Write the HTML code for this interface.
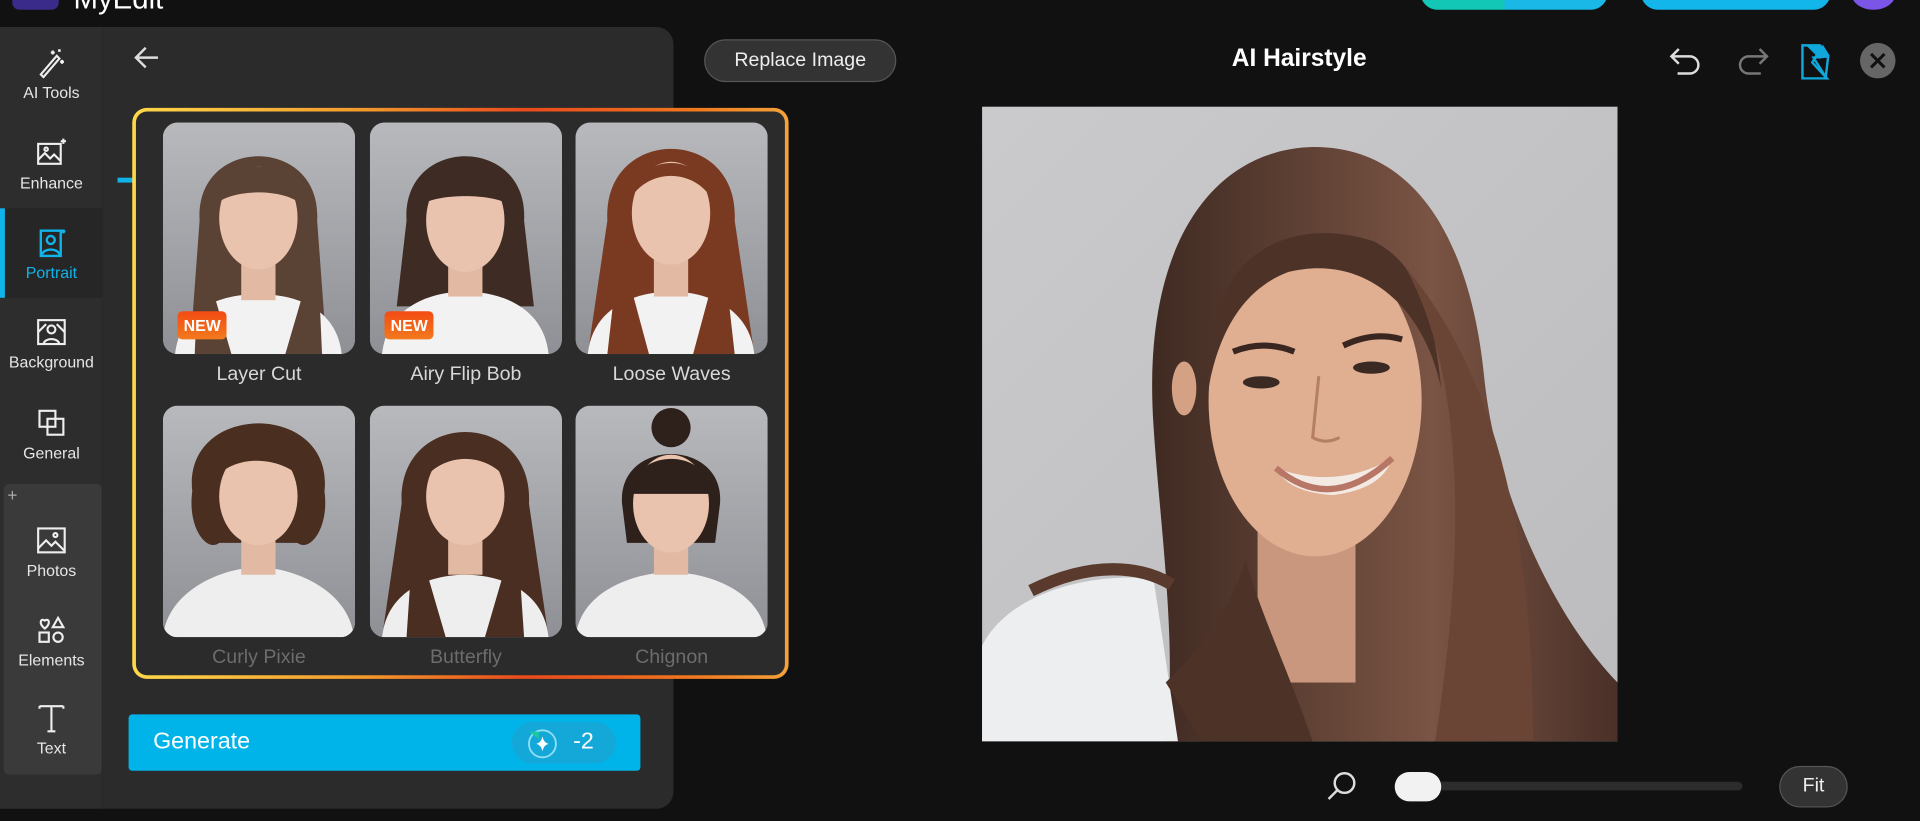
<!DOCTYPE html>
<html><head><meta charset="utf-8"><style>
*{margin:0;padding:0;box-sizing:border-box}
html,body{width:1920px;height:821px;overflow:hidden;background:#111;font-family:"Liberation Sans",sans-serif}
#st{position:absolute;left:0;top:0;width:1568px;height:670px;transform:scale(1.2245,1.2254);transform-origin:0 0;background:#111}
.abs{position:absolute}
.side{left:0;top:22px;width:84px;height:638px;background:#2d2d2d}
.it{position:absolute;left:0;width:84px;text-align:center;color:#e6e6e6;font-size:13px}
.it svg{display:block;margin:0 auto 4px}
.panel{left:84px;top:22px;width:466px;height:638px;background:#2b2b2b;border-radius:0 14px 14px 0}
.pop{left:108px;top:88px;width:536px;height:466px;border-radius:12px;padding:3px;background:linear-gradient(90deg,#ffd84a,#f39a2c 35%,#ea4a1c 60%,#f0771e 85%,#f5a23a)}
.pop>div{width:100%;height:100%;border-radius:9px;background:#2b2b2b;position:relative}
.card{position:absolute;width:157px;height:189px;border-radius:12px;overflow:hidden}
.lbl{position:absolute;width:157px;text-align:center;font-size:16px;color:#d8d8d8}
.new{position:absolute;left:12px;bottom:12px;background:linear-gradient(#f34b14,#f27a1e);color:#fff;font-weight:bold;font-size:13px;padding:4px 5px;border-radius:4px}
</style></head><body><div id="st">
<div class="abs" style="left:10px;top:-12px;width:38px;height:20px;border-radius:6px;background:#3a2a8a"></div>
<div class="abs" style="left:60px;top:-14px;color:#fff;font-size:24px">MyEdit</div>
<div class="abs" style="left:1160px;top:-20px;width:153px;height:28px;border-radius:14px;background:linear-gradient(90deg,#12c7b5 45%,#1ab8e6 45%)"></div>
<div class="abs" style="left:1340px;top:-20px;width:155px;height:28px;border-radius:14px;background:#12b6ea;color:#fff;font-size:12px;text-align:center;line-height:32px">No Watermark</div>
<div class="abs" style="left:1512px;top:-18px;width:36px;height:26px;border-radius:50%;background:#7a55e8"></div>
<div class="abs side"></div>
<div class="abs" style="left:0;top:170px;width:84px;height:73px;background:#262626"></div>
<div class="abs" style="left:0;top:170px;width:4px;height:73px;background:#10b4ea"></div>
<div class="it" style="top:38px"><svg width="26" height="26" viewBox="0 0 24 24" fill="none" stroke="#eee" stroke-width="1.6"><path d="M4 21L16 7l2 2L6 23z"/><path d="M13 3v3M11.5 4.5h3M20 10v3M18.5 11.5h3M18 2v2M17 3h2"/></svg>AI Tools</div>
<div class="it" style="top:112px"><svg width="26" height="26" viewBox="0 0 24 24" fill="none" stroke="#eee" stroke-width="1.6"><rect x="2" y="5" width="17" height="15"/><path d="M2 17l5-5 4 4 3-3 5 5"/><circle cx="8" cy="9" r="1.3"/><path d="M21 1v4M19 3h4"/></svg>Enhance</div>
<div class="it" style="top:185px;color:#10b4ea"><svg width="26" height="26" viewBox="0 0 24 24" fill="none" stroke="#10b4ea" stroke-width="1.8"><rect x="4" y="3" width="15" height="19"/><circle cx="11.5" cy="10" r="3"/><path d="M5 21c1-5 12-5 13 0"/><path d="M21 2v3M19.5 3.5h3"/></svg>Portrait</div>
<div class="it" style="top:258px"><svg width="26" height="26" viewBox="0 0 24 24" fill="none" stroke="#eee" stroke-width="1.6"><rect x="2" y="3" width="20" height="18"/><circle cx="12" cy="10" r="3"/><path d="M6 21c1-5 11-5 12 0M2 12l6-6M16 6l6 6"/></svg>Background</div>
<div class="it" style="top:332px"><svg width="26" height="26" viewBox="0 0 24 24" fill="none" stroke="#eee" stroke-width="1.6"><rect x="3" y="3" width="12" height="12"/><rect x="9" y="9" width="12" height="12"/></svg>General</div>
<div class="abs" style="left:3px;top:395px;width:80px;height:237px;background:#3a3a3a;border-radius:4px"></div>
<div class="abs" style="left:6px;top:396px;color:#aaa;font-size:14px">+</div>
<div class="it" style="top:428px"><svg width="26" height="26" viewBox="0 0 24 24" fill="none" stroke="#eee" stroke-width="1.6"><rect x="2" y="3" width="20" height="18"/><path d="M2 18l6-6 4 4 3-3 7 7"/><circle cx="15" cy="8" r="1.5"/></svg>Photos</div>
<div class="it" style="top:501px"><svg width="26" height="26" viewBox="0 0 24 24" fill="none" stroke="#eee" stroke-width="1.6"><path d="M7 11C2 7 4 3 7 5c3-2 5 2 0 6z"/><path d="M17 3l4 7h-8z"/><rect x="3" y="14" width="7" height="7"/><circle cx="17" cy="17.5" r="3.5"/></svg>Elements</div>
<div class="it" style="top:573px"><svg width="26" height="26" viewBox="0 0 24 24" fill="none" stroke="#eee" stroke-width="1.6"><path d="M3 3h18M12 3v19M9 22h6M3 3v2M21 3v2"/></svg>Text</div>
<div class="abs panel"></div>
<svg class="abs" style="left:108px;top:36px" width="24" height="22" viewBox="0 0 24 22" fill="none" stroke="#ddd" stroke-width="2"><path d="M21 11H4M11 3l-8 8 8 8"/></svg>
<div class="abs" style="left:96px;top:145px;width:14px;height:4px;background:#10b4ea"></div>
<div class="abs pop"><div>
<svg width="0" height="0" style="position:absolute"><defs><linearGradient id="bg" x1="0" y1="0" x2="0" y2="1"><stop offset="0" stop-color="#b8b9bd"/><stop offset="1" stop-color="#8e9095"/></linearGradient></defs></svg>
<div class="card" style="left:22px;top:9px"><svg width="157" height="189"><rect width="157" height="189" fill="url(#bg)"/><path d="M30 80C26 10 130 10 126 80L134 189H22z" fill="#5a4234"/><path d="M10 189C14 150 50 140 78 140s64 10 68 49z" fill="#f2f2f2"/><path d="M30 100L26 189h30zM126 100l4 89h-30z" fill="#5a4234"/><rect x="64" y="100" width="28" height="45" fill="#e2b9a3"/><ellipse cx="78" cy="78" rx="32" ry="42" fill="#e9c3ae"/><path d="M44 66C46 26 110 26 112 66C98 54 58 54 44 66z" fill="#5a4234"/></svg><div class="new">NEW</div></div>
<div class="lbl" style="left:22px;top:206px">Layer Cut</div>
<div class="card" style="left:191px;top:9px"><svg width="157" height="189"><rect width="157" height="189" fill="url(#bg)"/><path d="M30 80C26 10 130 10 126 80L134 150H22z" fill="#3e2c24"/><path d="M10 189C14 150 50 138 78 138s64 12 68 51z" fill="#f2f2f2"/><rect x="64" y="100" width="28" height="42" fill="#e2b9a3"/><ellipse cx="78" cy="80" rx="32" ry="42" fill="#e9c3ae"/><path d="M44 66C48 28 108 28 112 66C98 58 58 58 44 66z" fill="#3e2c24"/></svg><div class="new">NEW</div></div>
<div class="lbl" style="left:191px;top:206px">Airy Flip Bob</div>
<div class="card" style="left:359px;top:9px"><svg width="157" height="189"><rect width="157" height="189" fill="url(#bg)"/><path d="M26 80C22 2 134 2 130 80L146 189H10z" fill="#7a3a22"/><path d="M10 189C14 150 50 138 78 138s64 12 68 51z" fill="#f2f2f2"/><path d="M36 100L26 189h34zM120 100l10 89H96z" fill="#7a3a22"/><rect x="64" y="100" width="28" height="42" fill="#e2b9a3"/><ellipse cx="78" cy="74" rx="32" ry="42" fill="#e9c3ae"/><path d="M46 60C52 24 104 24 110 60C94 38 62 38 46 60z" fill="#7a3a22"/></svg></div>
<div class="lbl" style="left:359px;top:206px">Loose Waves</div>
<div class="card" style="left:22px;top:240px"><svg width="157" height="189"><rect width="157" height="189" fill="url(#bg)"/><path d="M24 70C16 -4 140 -4 132 70C136 100 120 120 110 112H46C36 120 20 100 24 70z" fill="#4a2e20"/><path d="M0 189C4 150 50 132 78 132s74 18 78 57z" fill="#eee"/><rect x="64" y="96" width="28" height="42" fill="#e2b9a3"/><ellipse cx="78" cy="74" rx="32" ry="40" fill="#e9c3ae"/><path d="M42 60C44 18 112 18 114 60C98 42 60 38 42 60z" fill="#4a2e20"/></svg></div>
<div class="lbl" style="left:22px;top:437px;color:#6c6c6c">Curly Pixie</div>
<div class="card" style="left:191px;top:240px"><svg width="157" height="189"><rect width="157" height="189" fill="url(#bg)"/><path d="M26 80C22 2 134 2 130 80L146 189H10z" fill="#4a2e22"/><path d="M10 189C14 150 50 138 78 138s64 12 68 51z" fill="#eee"/><path d="M36 100L30 189h32zM120 100l6 89H94z" fill="#4a2e22"/><rect x="64" y="96" width="28" height="42" fill="#e2b9a3"/><ellipse cx="78" cy="74" rx="32" ry="40" fill="#e9c3ae"/><path d="M44 60C50 22 106 22 112 60C94 38 62 38 44 60z" fill="#4a2e22"/></svg></div>
<div class="lbl" style="left:191px;top:437px;color:#6c6c6c">Butterfly</div>
<div class="card" style="left:359px;top:240px"><svg width="157" height="189"><rect width="157" height="189" fill="url(#bg)"/><circle cx="78" cy="18" r="16" fill="#2e201a"/><path d="M38 80C34 26 122 26 118 80L114 112H42z" fill="#2e201a"/><path d="M0 189C4 150 50 136 78 136s74 14 78 53z" fill="#eee"/><rect x="64" y="96" width="28" height="42" fill="#e2b9a3"/><ellipse cx="78" cy="80" rx="31" ry="40" fill="#e9c3ae"/><path d="M46 72C46 34 110 34 110 72z" fill="#2e201a"/></svg></div>
<div class="lbl" style="left:359px;top:437px;color:#6c6c6c">Chignon</div>
</div></div>
<div class="abs" style="left:105px;top:583px;width:418px;height:46px;background:#00b4ea;border-radius:3px"></div>
<div class="abs" style="left:125px;top:595px;color:#fff;font-size:19px">Generate</div>
<div class="abs" style="left:418px;top:589px;width:85px;height:34px;border-radius:17px;background:#14a8d8"></div>
<svg class="abs" style="left:430px;top:594px" width="26" height="26" viewBox="0 0 26 26"><circle cx="13" cy="13" r="11" fill="none" stroke="#8fe0f4" stroke-width="1.5"/><path d="M2 3h8v6z" fill="#1bc9a0"/><path d="M13 7q1 5 5 6q-4 1-5 6q-1-5-5-6q4-1 5-6z" fill="#fff"/></svg>
<div class="abs" style="left:468px;top:595px;color:#fff;font-size:19px">-2</div>
<div class="abs" style="left:575px;top:32px;width:157px;height:35px;border-radius:18px;background:#333;border:1px solid #555;color:#eee;font-size:16px;text-align:center;line-height:33px">Replace Image</div>
<div class="abs" style="left:961px;top:37px;width:200px;text-align:center;color:#fff;font-size:20px;font-weight:bold">AI Hairstyle</div>
<svg class="abs" style="left:1362px;top:36px" width="30" height="28" viewBox="0 0 30 28" fill="none" stroke="#ddd" stroke-width="2"><path d="M9 4L3 10l6 6M3 10h15a7 7 0 0 1 0 14H8"/></svg>
<svg class="abs" style="left:1416px;top:36px" width="30" height="28" viewBox="0 0 30 28" fill="none" stroke="#777" stroke-width="2"><path d="M21 4l6 6-6 6M27 10H12a7 7 0 0 0 0 14h10"/></svg>
<svg class="abs" style="left:1469px;top:35px" width="30" height="30" viewBox="0 0 30 30"><path d="M3 2h14v4l-6 10 12 13H3z" fill="none" stroke="#10a8dc" stroke-width="2"/><path d="M6 2h14l5 8-8 3z" fill="#10a8dc"/><path d="M12 12l12-1-2 17z" fill="none" stroke="#10a8dc" stroke-width="2"/></svg>
<div class="abs" style="left:1519px;top:35px;width:29px;height:29px;border-radius:50%;background:#666"></div>
<svg class="abs" style="left:1519px;top:35px" width="29" height="29" viewBox="0 0 29 29" stroke="#111" stroke-width="2.5"><path d="M9 9l11 11M20 9L9 20"/></svg>
<!-- photo -->
<svg class="abs" style="left:802px;top:87px" width="519" height="518" viewBox="0 0 519 518">
<defs><linearGradient id="pb" x1="0" y1="0" x2="1" y2="1"><stop offset="0" stop-color="#cacacc"/><stop offset="1" stop-color="#bcbcbf"/></linearGradient>
<linearGradient id="hr" x1="0" y1="0" x2="1" y2="0"><stop offset="0" stop-color="#3f2a22"/><stop offset=".6" stop-color="#7a5444"/><stop offset="1" stop-color="#4a3028"/></linearGradient></defs>
<rect width="519" height="518" fill="url(#pb)"/>
<path d="M140 260C130 110 190 35 270 33C360 32 400 120 410 220C420 320 470 420 519 470V518H150C160 440 145 340 140 260z" fill="url(#hr)"/>
<path d="M0 518V440C20 400 80 380 140 385L160 518z" fill="#eceef0"/>
<path d="M40 395C90 370 130 375 155 390" stroke="#5a3a2c" stroke-width="10" fill="none"/>
<rect x="225" y="330" width="80" height="140" fill="#c9977d"/>
<ellipse cx="272" cy="240" rx="87" ry="127" fill="#e0ae90"/>
<path d="M185 230C180 110 260 90 320 110C360 130 370 180 375 230C360 160 310 120 250 135C210 150 192 190 185 230z" fill="#4d3228"/>
<path d="M345 130C395 220 395 360 370 518H450C450 380 430 230 345 130z" fill="#6a4536"/>
<path d="M150 470L180 518h90C250 460 230 420 215 370C200 420 170 450 150 470z" fill="#4d3228"/>
<ellipse cx="165" cy="230" rx="10" ry="22" fill="#d4a184"/>
<path d="M205 200q25-10 50 0M295 195q25-12 48-5" stroke="#3a2620" stroke-width="5" fill="none"/>
<ellipse cx="228" cy="225" rx="15" ry="5" fill="#3b2a24"/><ellipse cx="318" cy="213" rx="15" ry="5" fill="#3b2a24"/>
<path d="M275 220l-5 50q10 6 22 0" stroke="#b57f66" stroke-width="2.5" fill="none"/>
<path d="M240 295q50 18 95-8q-8 25-48 30q-37-2-47-22z" fill="#f3eae4"/>
<path d="M240 295q45 38 95-8" stroke="#b77666" stroke-width="5" fill="none"/>
</svg>
<svg class="abs" style="left:1083px;top:628px" width="26" height="26" viewBox="0 0 26 26" fill="none" stroke="#ddd" stroke-width="2"><circle cx="15" cy="11" r="8"/><path d="M9 17l-7 7"/></svg>
<div class="abs" style="left:1140px;top:638px;width:283px;height:7px;border-radius:4px;background:#2c2c2c"></div>
<div class="abs" style="left:1139px;top:630px;width:38px;height:24px;border-radius:12px;background:#f2f2f2"></div>
<div class="abs" style="left:1453px;top:625px;width:56px;height:34px;border-radius:17px;background:#333;border:1px solid #555;color:#eee;font-size:16px;text-align:center;line-height:32px">Fit</div>
</div></body></html>
